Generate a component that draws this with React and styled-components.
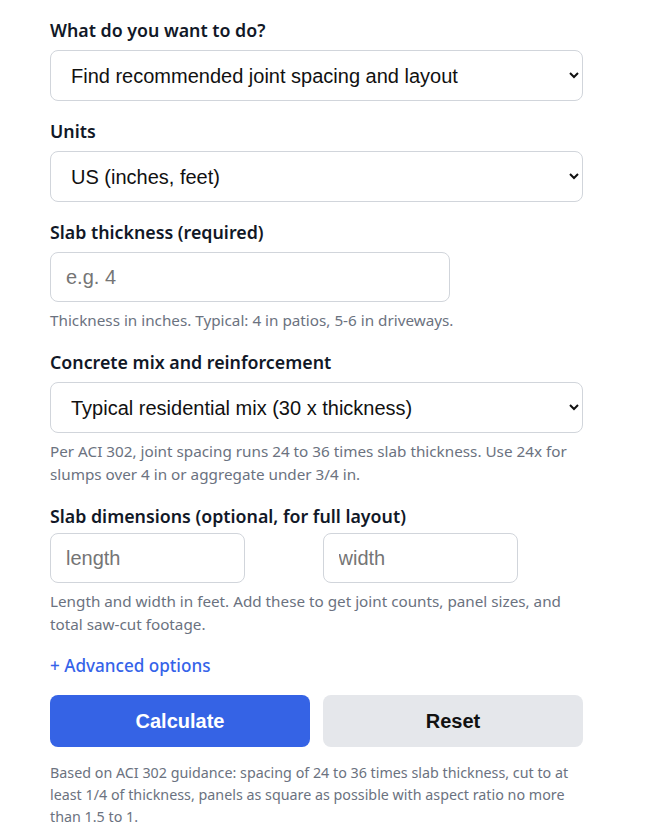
import React from "react";
import styled, { createGlobalStyle } from "styled-components";

const Global = createGlobalStyle`
  html, body { margin: 0; padding: 0; background: #ffffff; }
  body { font-family: "Noto Sans", "Open Sans", sans-serif; color: #111827; }
  * { box-sizing: border-box; }
`;

const Page = styled.div`
  width: 533px;
  margin-left: 50px;
  padding-top: 18px;
`;

const Group = styled.div`
  margin-bottom: 18px;
`;

const Label = styled.label`
  display: block;
  font-size: 17.8px;
  font-weight: 600;
  line-height: 24px;
  color: #111827;
  margin-bottom: ${(p) => (p.$tight ? "5px" : "8px")};
`;

const Select = styled.select`
  display: block;
  width: 100%;
  height: 51px;
  padding: 0 14px 0 16px;
  border: 1px solid #d1d5db;
  border-radius: 8px;
  background: #ffffff;
  font-family: "Liberation Sans", Arial, sans-serif;
  font-size: 20px;
  color: #111111;
`;

const Input = styled.input`
  display: block;
  width: 75%;
  height: 50px;
  padding: 0 15px;
  border: 1px solid #d1d5db;
  border-radius: 8px;
  background: #ffffff;
  font-family: "Liberation Sans", Arial, sans-serif;
  font-size: 20px;
  color: #111111;
  &::placeholder { color: #757575; }
`;

const Pair = styled.div`
  display: grid;
  grid-template-columns: 1fr 1fr;
  gap: 12px;
`;

const Help = styled.p`
  margin: 7px 0 0;
  font-size: 15.25px;
  line-height: 23px;
  color: #6b7280;
`;

const Toggle = styled.button`
  display: block;
  padding: 0;
  border: none;
  background: none;
  font-family: "Noto Sans", "Open Sans", sans-serif;
  font-size: 17.1px;
  font-weight: 500;
  line-height: 24px;
  color: #3563e9;
  margin: 10px 0 17px;
  cursor: pointer;
`;

const Actions = styled.div`
  display: grid;
  grid-template-columns: 1fr 1fr;
  gap: 13px;
`;

const Button = styled.button`
  height: 52px;
  border: none;
  border-radius: 8px;
  font-family: "Liberation Sans", Arial, sans-serif;
  font-size: 20px;
  font-weight: 700;
  background: ${(p) => (p.$primary ? "#3563e5" : "#e5e7eb")};
  color: ${(p) => (p.$primary ? "#ffffff" : "#111111")};
  cursor: pointer;
`;

const Note = styled.p`
  margin: 15px 0 0;
  font-size: 14.3px;
  line-height: 22px;
  color: #6b7280;
`;

export default function App() {
  return (
    <>
      <Global />
      <Page>
        <Group>
          <Label>What do you want to do?</Label>
          <Select defaultValue="layout">
            <option value="layout">Find recommended joint spacing and layout</option>
          </Select>
        </Group>
        <Group>
          <Label>Units</Label>
          <Select defaultValue="us">
            <option value="us">US (inches, feet)</option>
          </Select>
        </Group>
        <Group>
          <Label>Slab thickness (required)</Label>
          <Input placeholder="e.g. 4" />
          <Help>Thickness in inches. Typical: 4 in patios, 5-6 in driveways.</Help>
        </Group>
        <Group>
          <Label>Concrete mix and reinforcement</Label>
          <Select defaultValue="typ">
            <option value="typ">Typical residential mix (30 x thickness)</option>
          </Select>
          <Help>
            Per ACI 302, joint spacing runs 24 to 36 times slab thickness. Use 24x for
            slumps over 4 in or aggregate under 3/4 in.
          </Help>
        </Group>
        <Group>
          <Label $tight>Slab dimensions (optional, for full layout)</Label>
          <Pair>
            <Input placeholder="length" />
            <Input placeholder="width" />
          </Pair>
          <Help>
            Length and width in feet. Add these to get joint counts, panel sizes, and
            total saw-cut footage.
          </Help>
        </Group>
        <Toggle type="button">+ Advanced options</Toggle>
        <Actions>
          <Button $primary type="button">Calculate</Button>
          <Button type="button">Reset</Button>
        </Actions>
        <Note>
          Based on ACI 302 guidance: spacing of 24 to 36 times slab thickness, cut to at
          least 1/4 of thickness, panels as square as possible with aspect ratio no more
          than 1.5 to 1.
        </Note>
      </Page>
    </>
  );
}
